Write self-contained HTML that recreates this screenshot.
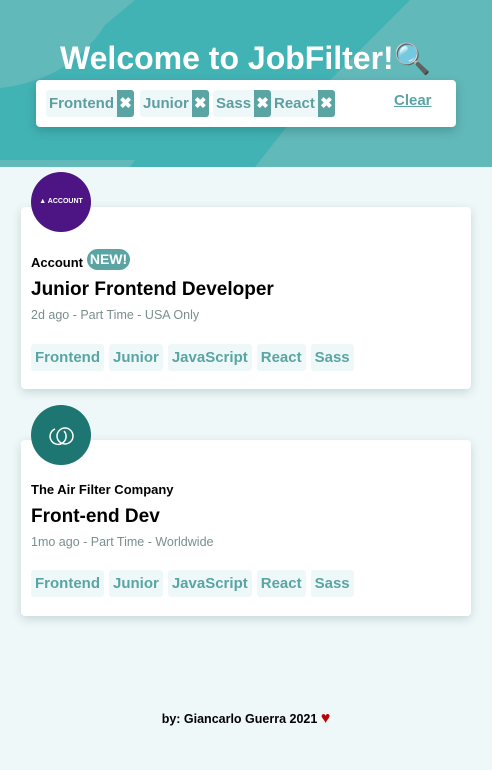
<!DOCTYPE html>
<html><head><meta charset="utf-8"><style>
*{box-sizing:border-box;margin:0;padding:0}
body{width:492px;height:770px;background:#eff8f9;font-family:"Liberation Sans",sans-serif;position:relative;overflow:hidden}
.hdr{position:absolute;left:0;top:0;width:492px;height:167px;background:#42b3b4;overflow:hidden}
.hdr svg{position:absolute;left:0;top:0}
h1{position:absolute;left:60px;top:40px;font-size:32px;font-weight:bold;color:#fff;white-space:nowrap}
.fb{position:absolute;left:36px;top:80px;width:420px;height:47px;background:#fff;border-radius:4px;box-shadow:0 4px 10px rgba(0,60,60,.25)}
.ft{position:absolute;top:10px;height:27px;display:flex;background:#eff8f9;border-radius:3px;overflow:hidden}
.ft span{font-size:15px;font-weight:bold;line-height:27px;padding:0 3px 0 3px;color:#5f9ea0}
.ft b{width:17px;background:#5ba4a4;color:#fff;font-size:15px;text-align:center;line-height:27px}
.clear{position:absolute;left:358px;top:12px;font-size:15px;font-weight:bold;color:#5ba4a4;text-decoration:underline}
.card{position:absolute;left:21px;width:450px;background:#fff;border-radius:4px;box-shadow:0 3px 10px rgba(0,60,60,.18)}
.logo{position:absolute;left:31px;width:60px;height:60px;border-radius:50%}
.co{position:absolute;left:10px;font-size:13px;font-weight:bold;color:#000}
.new{position:absolute;left:66px;top:42px;width:43px;height:21px;border-radius:11px;background:#5ba4a4;color:#fff;font-size:14px;font-weight:bold;text-align:center;line-height:21px}
.ti{position:absolute;left:10px;font-size:19px;font-weight:bold;color:#000}
.meta{position:absolute;left:10px;font-size:12.5px;color:#7b8e8e}
.tags{position:absolute;left:10px;display:flex;gap:5px}
.tags span{background:#eff8f9;color:#5ba4a4;font-weight:bold;font-size:15px;height:27px;line-height:27px;padding:0 4px;border-radius:3px}
.foot{position:absolute;left:0;width:492px;top:710px;text-align:center;font-size:12.5px;font-weight:bold;color:#000}
</style></head><body>
<div class="hdr"><svg width="492" height="167">
<path d="M0 0H135L105 25Q70 80 0 88Z" fill="#62b9ba"/>
<path d="M255 0H492V167H255L300 110L410 0Z" fill="#62b9ba"/>
<path d="M270 0H410L300 110L255 160Z" fill="#42b3b4"/>
<path d="M0 160H135L130 167H0Z" fill="#62b9ba"/>
</svg>
<h1>Welcome to JobFilter!<span style="font-size:30px">&#128269;</span></h1>
<div class="fb">
<div class="ft" style="left:10px"><span>Frontend</span><b>✖</b></div>
<div class="ft" style="left:104px"><span>Junior</span><b>✖</b></div>
<div class="ft" style="left:177px"><span>Sass</span><b>✖</b></div>
<div class="ft" style="left:235px"><span>React</span><b>✖</b></div>
<div class="clear">Clear</div>
</div></div>

<div class="card" style="top:207px;height:182px">
<div class="co" style="top:48px">Account</div><div class="new">NEW!</div>
<div class="ti" style="top:72px">Junior Frontend Developer</div>
<div class="meta" style="top:101px">2d ago - Part Time - USA Only</div>
<div class="tags" style="top:137px"><span>Frontend</span><span>Junior</span><span>JavaScript</span><span>React</span><span>Sass</span></div>
</div>
<div class="logo" style="top:172px;background:#4c1583;color:#fff;font-size:7px;font-weight:bold;text-align:center;line-height:60px">▲ ACCOUNT</div>

<div class="card" style="top:440px;height:176px">
<div class="co" style="top:42px">The Air Filter Company</div>
<div class="ti" style="top:66px">Front-end Dev</div>
<div class="meta" style="top:95px">1mo ago - Part Time - Worldwide</div>
<div class="tags" style="top:130px"><span>Frontend</span><span>Junior</span><span>JavaScript</span><span>React</span><span>Sass</span></div>
</div>
<div class="logo" style="top:405px;background:#1d7671"><svg width="60" height="60"><circle cx="34" cy="31" r="8" fill="none" stroke="#fff" stroke-width="1.5"/><path d="M24 24A8 8 0 1 0 33 26" fill="none" stroke="#fff" stroke-width="1.5"/></svg></div>

<div class="foot">by: Giancarlo Guerra 2021 <span style="color:#b00;font-size:16px">♥</span></div>
</body></html>
